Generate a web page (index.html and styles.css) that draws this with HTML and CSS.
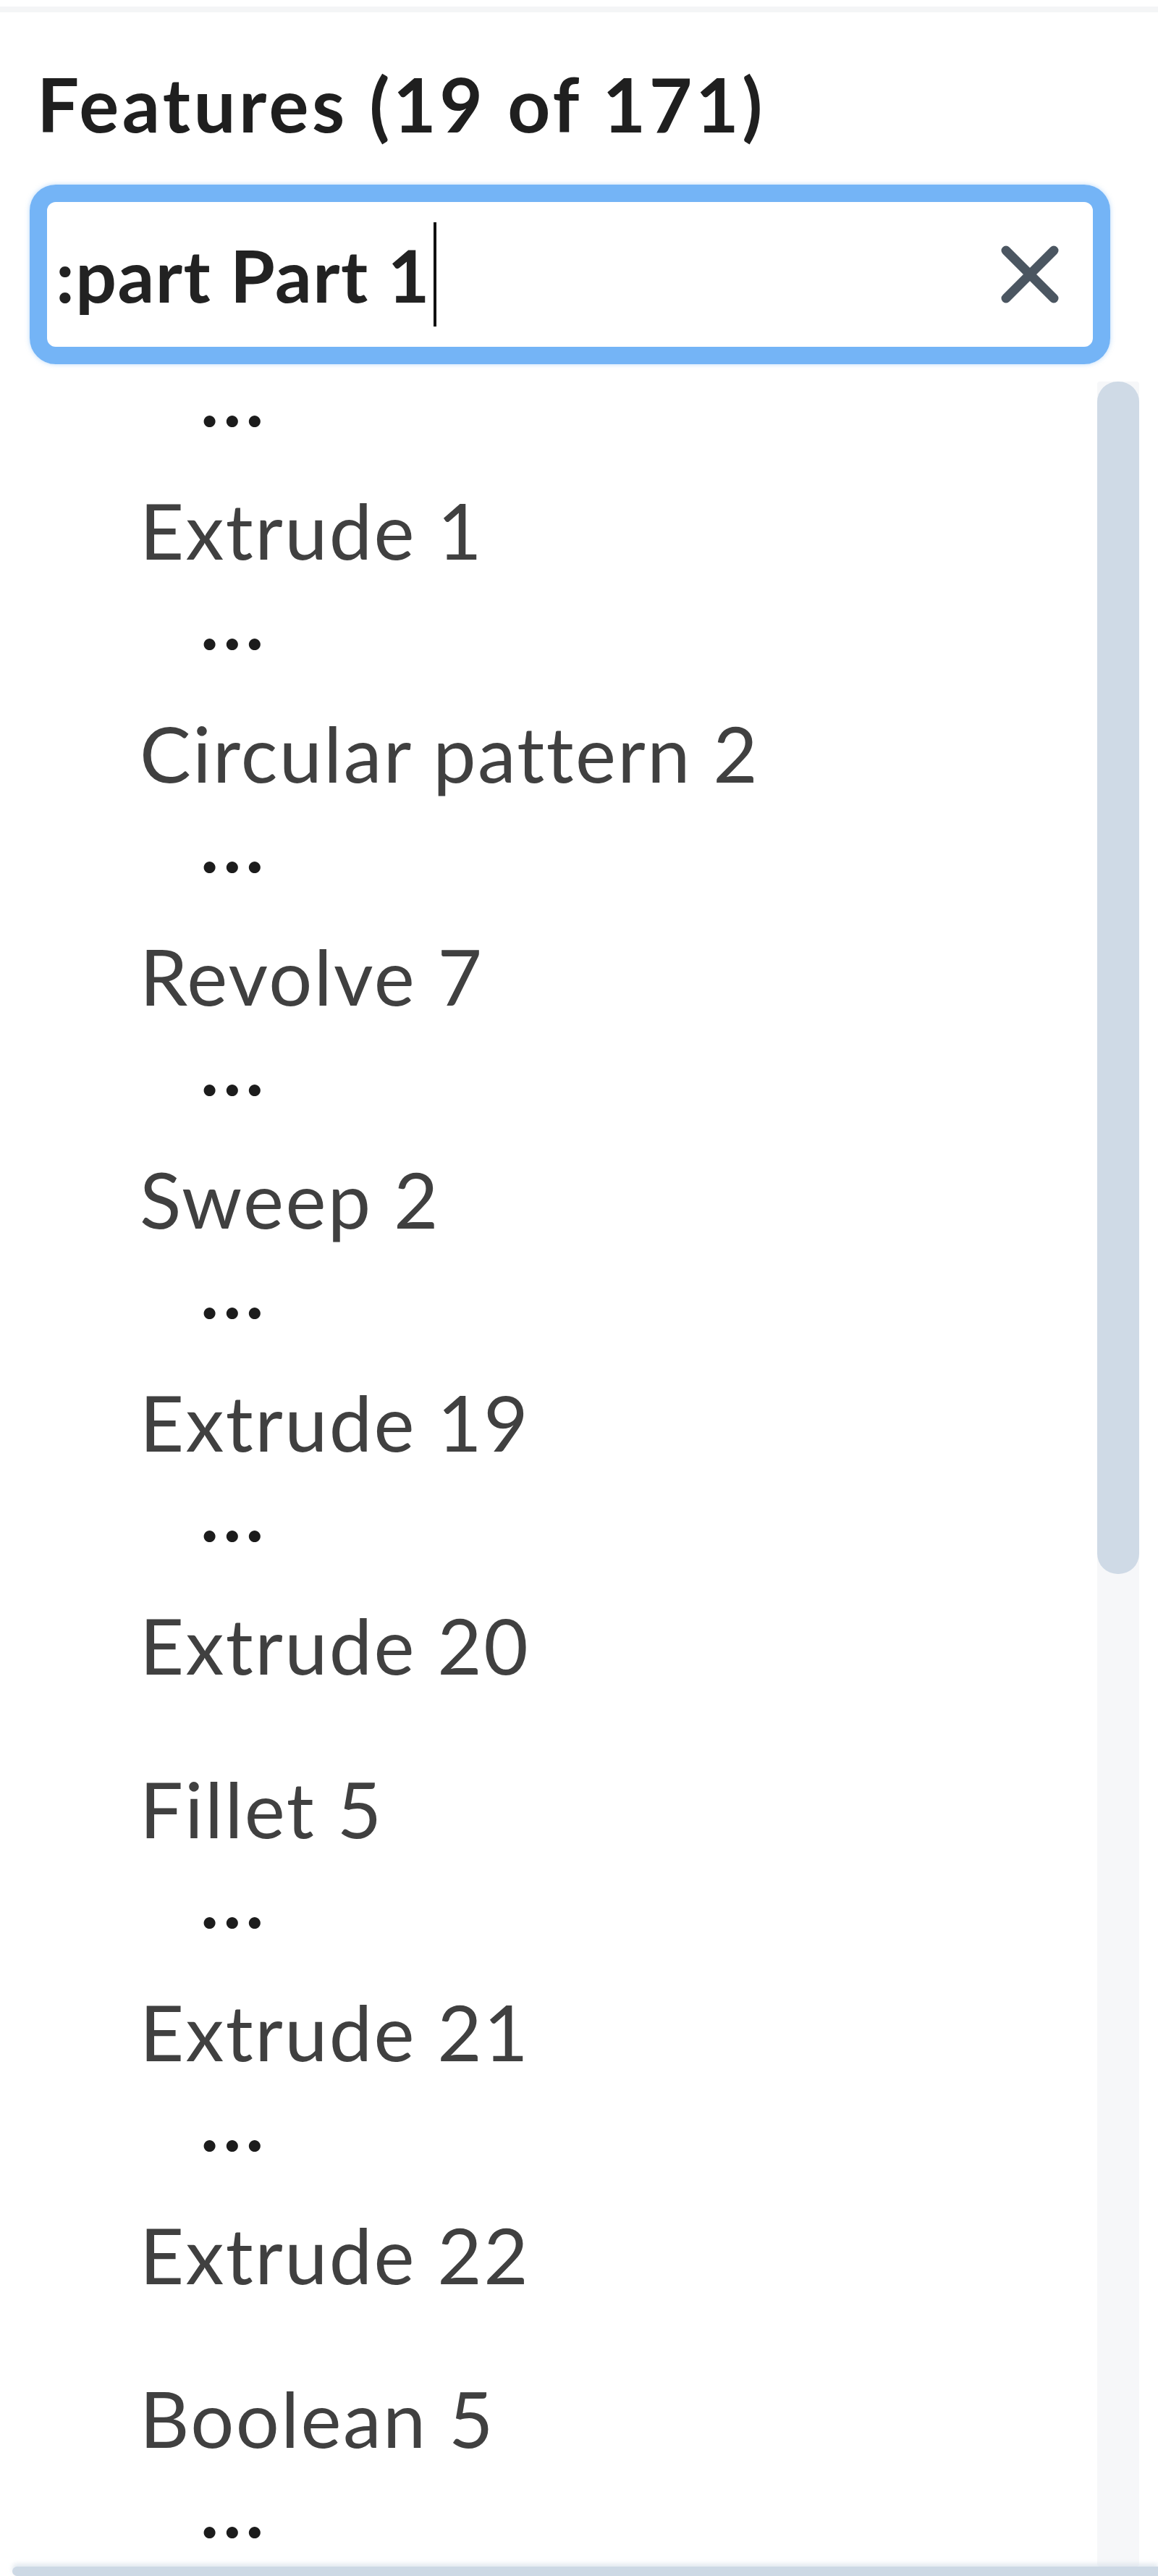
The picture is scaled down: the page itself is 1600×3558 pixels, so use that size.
FILE: index.html
```html
<!DOCTYPE html>
<html lang="en">
<head>
<meta charset="utf-8">
<title>Features</title>
<link rel="stylesheet" href="styles.css">
</head>
<body>
<div class="page">
  <div class="topline"></div>
  <h1 class="title">Features (19 of 171)</h1>
  <div class="search">
    <div class="search-text">:part Part 1<span class="caret"></span></div>
    <svg class="clear" viewBox="0 0 80 80" aria-hidden="true">
      <path d="M7 7 L73 73 M73 7 L7 73" stroke="#4b5661" stroke-width="13" stroke-linecap="round" fill="none"/>
    </svg>
  </div>
  <div class="body">
    <div class="list">
      <div class="dots">...</div>
      <div class="item">Extrude 1</div>
      <div class="dots">...</div>
      <div class="item">Circular pattern 2</div>
      <div class="dots">...</div>
      <div class="item">Revolve 7</div>
      <div class="dots">...</div>
      <div class="item">Sweep 2</div>
      <div class="dots">...</div>
      <div class="item">Extrude 19</div>
      <div class="dots">...</div>
      <div class="item">Extrude 20</div>
      <div class="item">Fillet 5</div>
      <div class="dots">...</div>
      <div class="item">Extrude 21</div>
      <div class="dots">...</div>
      <div class="item">Extrude 22</div>
      <div class="item">Boolean 5</div>
      <div class="dots">...</div>
    </div>
    <div class="vtrack"><div class="vthumb"></div></div>
  </div>
  <div class="hscroll"></div>
</div>
</body>
</html>
```
FILE: styles.css
```css
html, body {
  margin: 0;
  padding: 0;
  background: #ffffff;
}
.page {
  width: 1600px;
  height: 3558px;
  overflow: hidden;
  display: flex;
  flex-direction: column;
  font-family: Lato, "Noto Sans", sans-serif;
}
.topline {
  margin-top: 9px;
  height: 8px;
  background: #f4f5f6;
  flex: none;
}
.title {
  margin: 66px 0 0 51px;
  font-size: 103px;
  line-height: 120px;
  font-weight: 700;
  letter-spacing: 4.5px;
  color: #1f1f1f;
  flex: none;
}
.search {
  margin: 52px 66px 0 41px;
  height: 200px;
  border: 24px solid #74b4f6;
  border-radius: 36px;
  box-shadow: 0 0 6px rgba(116, 180, 246, 0.5);
  display: flex;
  align-items: center;
  justify-content: space-between;
  padding: 0 47px 0 12px;
  flex: none;
}
.search-text {
  font-size: 100px;
  line-height: 200px;
  font-weight: 700;
  letter-spacing: 1.5px;
  color: #222222;
  display: flex;
  align-items: center;
}
.caret {
  display: block;
  width: 4px;
  height: 144px;
  background: #111111;
  margin-left: 4px;
}
.clear {
  width: 80px;
  height: 80px;
  flex: none;
}
.body {
  margin-top: 24px;
  height: 3018px;
  display: flex;
  flex: none;
}
.list {
  flex: 1;
  padding-top: 10px;
  padding-left: 193px;
  color: #404040;
  font-size: 106px;
  letter-spacing: 2.4px;
}
.item {
  height: 226px;
  line-height: 226px;
  white-space: nowrap;
}
.dots {
  height: 82px;
  line-height: 12px;
  padding-top: 5px;
  padding-left: 84px;
  font-weight: 700;
  letter-spacing: 6px;
  color: #1c1c1c;
  box-sizing: border-box;
}
.vtrack {
  width: 58px;
  margin-right: 26px;
  background: #f6f7f9;
  border-radius: 4px;
  flex: none;
}
.vthumb {
  height: 1647px;
  background: #cfdae6;
  border-radius: 28px;
}
.hscroll {
  margin-left: 17px;
  height: 13px;
  background: #cdd9e5;
  border-radius: 10px 0 0 10px;
  box-shadow: 0 -4px 6px rgba(205, 217, 229, 0.6);
  flex: none;
}
```
